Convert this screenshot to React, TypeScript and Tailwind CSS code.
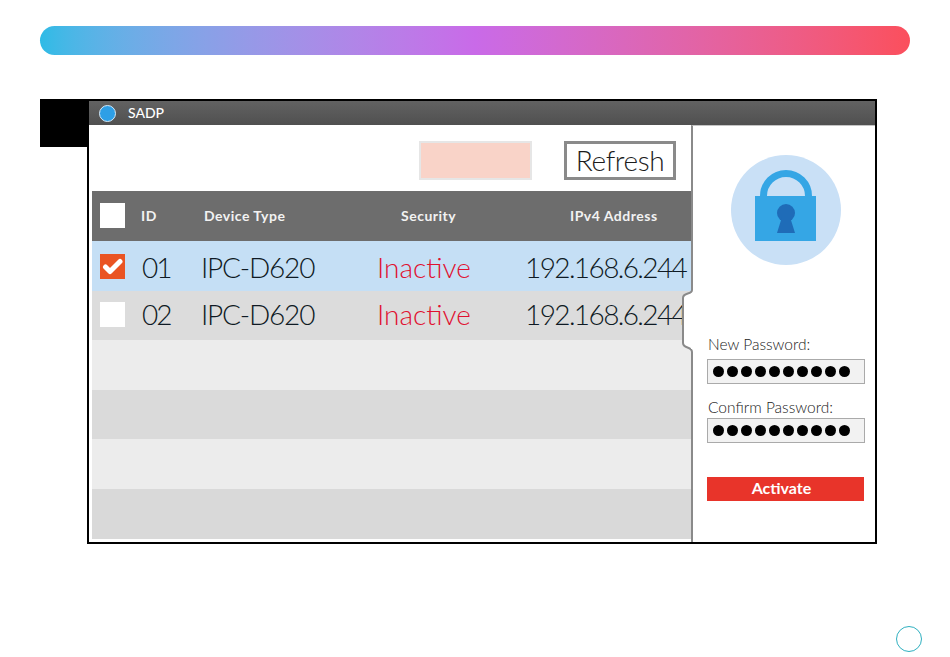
const rows = [
  { id: "01", bg: "bg-[#c5dff5]", h: "h-[50px] pt-[2px]", checked: true, device: "IPC-D620", status: "Inactive", ip: "192.168.6.244" },
  { id: "02", bg: "bg-[#dcdcdc]", h: "h-[49px] pb-[3px]", checked: false, device: "IPC-D620", status: "Inactive", ip: "192.168.6.244" },
];

const emptyRows = [
  { bg: "bg-[#ececec]", h: "h-[50px]" },
  { bg: "bg-[#dadada]", h: "h-[49px]" },
  { bg: "bg-[#ececec]", h: "h-[50px]" },
  { bg: "bg-[#d9d9d9]", h: "h-[50px]" },
];

function Dots() {
  return (
    <div className="flex h-[25px] w-[158px] items-center gap-[3px] border border-[#aaaaaa] bg-[#f2f2f2] pl-[5px]">
      {Array.from({ length: 10 }).map((_, i) => (
        <span key={i} className="h-[11px] w-[11px] rounded-full bg-black" />
      ))}
    </div>
  );
}

function Lock() {
  return (
    <svg width="110" height="110" viewBox="0 0 110 110">
      <circle cx="55" cy="55" r="55" fill="#c9e0f6" />
      <path d="M32.500 42V41a22.500 22.500 0 0 1 45 0V42" fill="none" stroke="#35a6e5" strokeWidth="7" />
      <rect x="24" y="41" width="61" height="45" fill="#35a6e5" />
      <circle cx="55" cy="58" r="9" fill="#1f6cb8" />
      <path d="M51 62h8l5 16H46z" fill="#1f6cb8" />
    </svg>
  );
}

export default function App() {
  return (
    <div className="relative h-[657px] w-[950px] overflow-hidden bg-white font-['Lato',sans-serif]">
      <div className="px-10 pt-[26px]">
        <div className="h-[29px] w-[870px] rounded-full bg-gradient-to-r from-[#2dbbe6] via-[#c96ae8] to-[#fb4f5c]" />
      </div>

      {/* black tab over the window corner */}
      <div className="absolute left-10 top-[99px] h-[48px] w-[48px] bg-black" />

      <div className="ml-[87px] mt-[44px] flex h-[445px] w-[790px] flex-col border-2 border-black">
        <div className="flex h-6 shrink-0 items-center gap-3 bg-gradient-to-b from-[#626262] to-[#505050] pl-[10px]">
          <span className="h-[17px] w-[17px] rounded-full border border-[#d5e9f8] bg-[#2e9fe6]" />
          <span className="text-[14px] font-medium leading-none text-white">SADP</span>
        </div>

        <div className="flex min-h-0 flex-1">
          {/* device list */}
          <div className="w-[602px] shrink-0">
            <div className="flex h-[66px] items-start justify-end gap-8 pr-[15px] pt-4">
              <div className="h-[39px] w-[113px] border-2 border-[#e6e6e6] bg-[#f9d3c8]" />
              <div className="flex h-[39px] w-[112px] items-center justify-center border-[3px] border-[#8a8a8a] pb-[2px] text-[28px] font-light leading-none tracking-[-0.4px] text-[#1c1c1c]">
                Refresh
              </div>
            </div>

            <div className="ml-[3px] w-[599px]">
              <div className="flex h-[50px] items-center bg-[#6d6d6d] pb-[2px] text-[14px] font-bold tracking-[0.5px] text-[#f2f2f2]">
                <span className="ml-2 h-[25px] w-[25px] bg-white" />
                <span className="ml-4 w-[63px]">ID</span>
                <span className="w-[197px]">Device Type</span>
                <span className="w-[169px]">Security</span>
                <span>IPv4 Address</span>
              </div>

              {rows.map((r) => (
                <div key={r.id} className={`flex items-center whitespace-nowrap text-[28px] font-light leading-none text-[#0f1a24] ${r.bg} ${r.h}`}>
                  {r.checked ? (
                    <span className="-mt-[2px] ml-2 flex h-[25px] w-[25px] shrink-0 items-center justify-center bg-[#ea5423]">
                      <svg width="21" height="19" viewBox="0 0 21 19">
                        <path d="M3.500 10l4.500 4.500L18 4.500" fill="none" stroke="white" strokeWidth="5" strokeLinecap="round" strokeLinejoin="round" />
                      </svg>
                    </span>
                  ) : (
                    <span className="ml-2 h-[25px] w-[25px] shrink-0 bg-white" />
                  )}
                  <span className="ml-[17px] w-[59px] shrink-0 tracking-[-2px]">{r.id}</span>
                  <span className="w-[176px] shrink-0 tracking-[-1.200px]">{r.device}</span>
                  <span className="w-[148px] shrink-0 text-[#e01030]">{r.status}</span>
                  <span className="shrink-0 tracking-[-1.600px]">{r.ip}</span>
                </div>
              ))}

              {emptyRows.map((r, i) => (
                <div key={i} className={`${r.bg} ${r.h}`} />
              ))}
            </div>
          </div>

          {/* activation panel */}
          <div className="relative flex flex-1 flex-col border-l-2 border-t border-[#8a8a8a] border-t-[#c4c4c4] bg-white pl-[14px]">
            {/* tab notch: hides the end of the second row's address */}
            <svg className="absolute -left-[12px] top-[164px]" width="12" height="62" viewBox="0 0 12 62">
              <path d="M11 0C11 5 2 2 2 8V53C2 59 11 56 11 62H12V0Z" fill="white" />
              <path d="M11 0C11 5 2 2 2 8V53C2 59 11 56 11 62" fill="none" stroke="#8a8a8a" strokeWidth="2" />
            </svg>
            <svg className="absolute -left-[2px] top-[164px]" width="2" height="62" viewBox="0 0 2 62">
              <rect x="0" y="3" width="2" height="56" fill="white" />
            </svg>
            <div className="ml-6 mt-[29px]">
              <Lock />
            </div>
            <span className="ml-[1px] mt-[69px] text-[15.500px] font-light leading-[20px] text-[#222]">New Password:</span>
            <div className="mt-[5px]">
              <Dots />
            </div>
            <span className="ml-[1px] mt-[13px] text-[15.500px] font-light leading-[20px] text-[#222]">Confirm Password:</span>
            <div className="mt-[1px]">
              <Dots />
            </div>
            <div className="mt-[34px] flex h-6 w-[157px] items-center justify-center bg-[#e8342a] pb-[2px] pr-2 text-[16px] font-bold text-white">
              Activate
            </div>
          </div>
        </div>
      </div>

      <div className="absolute left-[896px] top-[626px] h-[26px] w-[26px] rounded-full border border-[#2fb0c0]" />
    </div>
  );
}
